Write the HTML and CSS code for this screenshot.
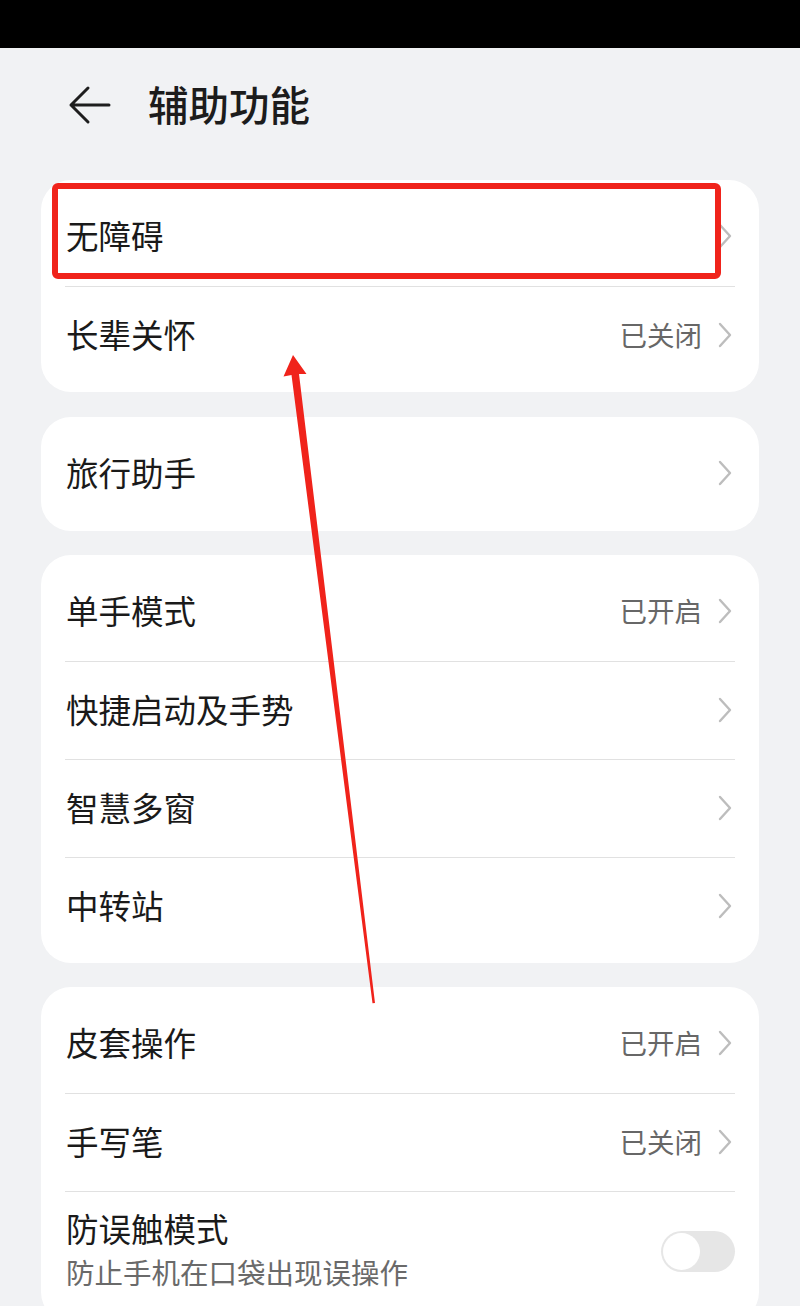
FILE: index.html
```html
<!DOCTYPE html>
<html lang="zh-CN">
<head>
<meta charset="utf-8">
<title>辅助功能</title>
<link rel="stylesheet" href="styles.css">
</head>
<body>
<div class="page">
  <div class="statusbar"></div>
  <header class="header">
    <svg class="back" width="44" height="40" viewBox="0 0 44 40">
      <path d="M20 3 L3 20 L20 37 M3 20 L41 20" fill="none" stroke="#1e1e1e" stroke-width="3" stroke-linecap="round" stroke-linejoin="round"/>
    </svg>
    <h1 class="title">辅助功能</h1>
  </header>

  <section class="card">
    <div class="row"><span class="label">无障碍</span><span class="right"><svg class="chev" width="14" height="26" viewBox="0 0 14 26"><path d="M2 2 L12 13 L2 24" fill="none" stroke="#bdbdbd" stroke-width="2.4" stroke-linecap="round" stroke-linejoin="round"/></svg></span></div>
    <div class="row"><span class="label">长辈关怀</span><span class="right"><span class="value">已关闭</span><svg class="chev" width="14" height="26" viewBox="0 0 14 26"><path d="M2 2 L12 13 L2 24" fill="none" stroke="#bdbdbd" stroke-width="2.4" stroke-linecap="round" stroke-linejoin="round"/></svg></span></div>
  </section>

  <section class="card">
    <div class="row"><span class="label">旅行助手</span><span class="right"><svg class="chev" width="14" height="26" viewBox="0 0 14 26"><path d="M2 2 L12 13 L2 24" fill="none" stroke="#bdbdbd" stroke-width="2.4" stroke-linecap="round" stroke-linejoin="round"/></svg></span></div>
  </section>

  <section class="card">
    <div class="row"><span class="label">单手模式</span><span class="right"><span class="value">已开启</span><svg class="chev" width="14" height="26" viewBox="0 0 14 26"><path d="M2 2 L12 13 L2 24" fill="none" stroke="#bdbdbd" stroke-width="2.4" stroke-linecap="round" stroke-linejoin="round"/></svg></span></div>
    <div class="row"><span class="label">快捷启动及手势</span><span class="right"><svg class="chev" width="14" height="26" viewBox="0 0 14 26"><path d="M2 2 L12 13 L2 24" fill="none" stroke="#bdbdbd" stroke-width="2.4" stroke-linecap="round" stroke-linejoin="round"/></svg></span></div>
    <div class="row"><span class="label">智慧多窗</span><span class="right"><svg class="chev" width="14" height="26" viewBox="0 0 14 26"><path d="M2 2 L12 13 L2 24" fill="none" stroke="#bdbdbd" stroke-width="2.4" stroke-linecap="round" stroke-linejoin="round"/></svg></span></div>
    <div class="row"><span class="label">中转站</span><span class="right"><svg class="chev" width="14" height="26" viewBox="0 0 14 26"><path d="M2 2 L12 13 L2 24" fill="none" stroke="#bdbdbd" stroke-width="2.4" stroke-linecap="round" stroke-linejoin="round"/></svg></span></div>
  </section>

  <section class="card">
    <div class="row"><span class="label">皮套操作</span><span class="right"><span class="value">已开启</span><svg class="chev" width="14" height="26" viewBox="0 0 14 26"><path d="M2 2 L12 13 L2 24" fill="none" stroke="#bdbdbd" stroke-width="2.4" stroke-linecap="round" stroke-linejoin="round"/></svg></span></div>
    <div class="row"><span class="label">手写笔</span><span class="right"><span class="value">已关闭</span><svg class="chev" width="14" height="26" viewBox="0 0 14 26"><path d="M2 2 L12 13 L2 24" fill="none" stroke="#bdbdbd" stroke-width="2.4" stroke-linecap="round" stroke-linejoin="round"/></svg></span></div>
    <div class="row row-tall">
      <div class="text">
        <span class="label">防误触模式</span>
        <span class="sub">防止手机在口袋出现误操作</span>
      </div>
      <span class="toggle"><span class="knob"></span></span>
    </div>
  </section>

  <div class="highlight"></div>
  <svg class="arrow" width="800" height="1306" viewBox="0 0 800 1306">
    <polygon points="293,355 306.5,374 299,374 375,1003 372.5,1003.3 291.5,375 283.5,376.5" fill="#f0231b"/>
  </svg>
</div>
</body>
</html>
```
FILE: styles.css
```css
* { box-sizing: border-box; }
html, body { margin: 0; padding: 0; }
body {
  background: #f1f2f4;
  font-family: "Noto Sans CJK SC", "Noto Sans", sans-serif;
  color: #1a1a1a;
}
.page {
  position: relative;
  width: 800px;
  height: 1306px;
  overflow: hidden;
  background: #f1f2f4;
}
.statusbar {
  height: 48px;
  background: #000;
}
.header {
  height: 132px;
  display: flex;
  align-items: center;
  padding: 0 0 20px 68px;
}
.back { display: block; margin-top: 2px; }
.title {
  margin: 0 0 0 36px;
  font-size: 40.5px;
  font-weight: 500;
  line-height: 1;
  color: #1c1c1c;
}
.card {
  margin: 0 41px 25px;
  background: #fff;
  border-radius: 30px;
  padding: 8px 24px;
}
.card:nth-of-type(2), .card:nth-of-type(3) { margin-bottom: 24px; }
.row {
  height: 98px;
  display: flex;
  align-items: center;
  justify-content: space-between;
  border-top: 1px solid #e1e1e1;
  padding-bottom: 4px;
}
.row:first-child { border-top: none; }
.label {
  font-size: 32.5px;
  line-height: 44px;
  color: #1a1a1a;
  padding-left: 1px;
}
.right {
  display: flex;
  align-items: center;
  gap: 16px;
  padding-right: 3px;
}
.value {
  font-size: 27.5px;
  color: #676767;
  line-height: 40px;
}
.chev { display: block; margin-top: 2px; }
.row-tall {
  height: auto;
  align-items: flex-start;
  padding-top: 14px;
  padding-bottom: 20px;
}
.text {
  display: flex;
  flex-direction: column;
}
.sub {
  font-size: 28.5px;
  line-height: 44px;
  color: #6a6a6a;
  padding-left: 1px;
}
.toggle {
  position: relative;
  width: 74px;
  height: 41px;
  border-radius: 21px;
  background: #e6e6e6;
  margin-top: 25px;
}
.knob {
  position: absolute;
  left: 2px;
  top: 2px;
  width: 37px;
  height: 37px;
  border-radius: 50%;
  background: #fff;
}
.highlight {
  position: absolute;
  left: 52px;
  top: 183px;
  width: 669px;
  height: 96px;
  border: 6px solid #f0231b;
  border-radius: 6px;
}
.arrow {
  position: absolute;
  left: 0;
  top: 0;
  pointer-events: none;
}
```
